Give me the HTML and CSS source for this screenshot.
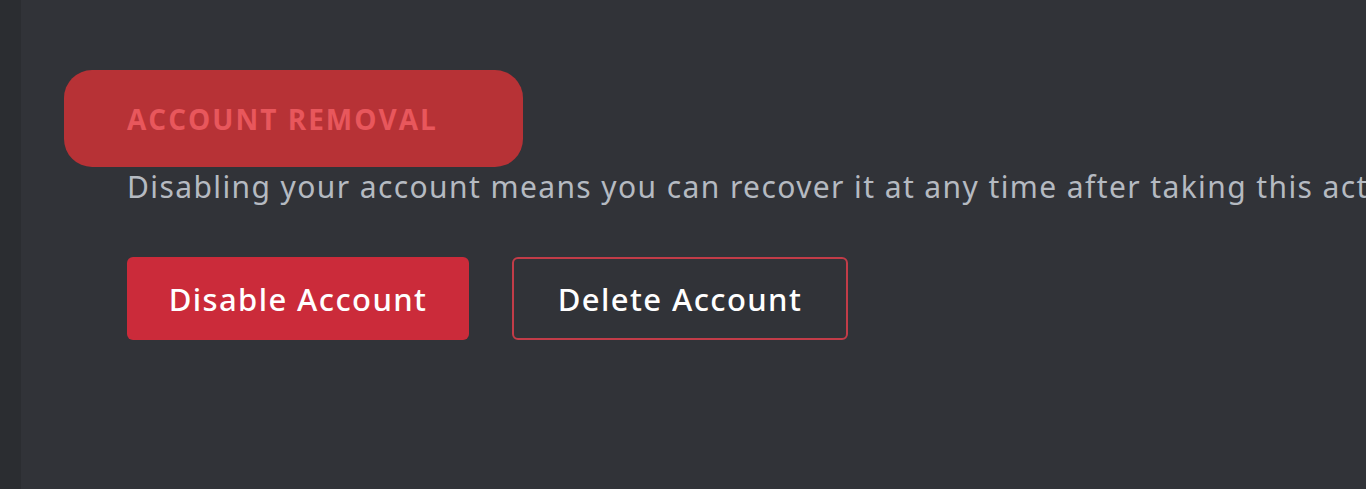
FILE: index.html
```html
<!DOCTYPE html>
<html lang="en">
<head>
<meta charset="utf-8">
<link rel="stylesheet" href="styles.css">
<title>Account Removal</title>
</head>
<body>
<div class="app">
  <aside class="rail"></aside>
  <main class="content">
    <section class="removal">
      <div class="header-pill"><h2 class="header">ACCOUNT REMOVAL</h2></div>
      <p class="desc">Disabling your account means you can recover it at any time after taking this action.</p>
      <div class="actions">
        <button class="btn btn-danger">Disable Account</button>
        <button class="btn btn-outline">Delete Account</button>
      </div>
    </section>
  </main>
</div>
</body>
</html>
```
FILE: styles.css
```css
html, body {
  margin: 0;
  padding: 0;
  height: 100%;
  overflow: hidden;
}
body {
  background: #313338;
  font-family: "Noto Sans", "Open Sans", sans-serif;
}
.app {
  display: flex;
  height: 489px;
}
.rail {
  width: 21px;
  flex: none;
  background: #2b2d31;
}
.content {
  flex: 1;
  background: #313338;
  min-width: 0;
  overflow: hidden;
}
.removal {
  padding: 70px 0 0 43px;
}
.header-pill {
  width: 459px;
  height: 97px;
  box-sizing: border-box;
  background: #b73236;
  border-radius: 28px;
  display: flex;
  align-items: center;
  padding-left: 63px;
}
.header {
  margin: 0;
  font-family: "Open Sans", "Noto Sans", sans-serif;
  font-weight: 700;
  font-size: 28px;
  letter-spacing: 2px;
  color: #e8575c;
  line-height: 1;
}
.desc {
  margin: 0 0 0 63px;
  white-space: nowrap;
  color: #b5bac1;
  font-size: 30px;
  letter-spacing: 1.4px;
  line-height: 40px;
}
.actions {
  display: flex;
  gap: 43px;
  margin: 50px 0 0 63px;
}
.btn {
  height: 83px;
  box-sizing: border-box;
  border-radius: 6px;
  font-family: "Noto Sans", "Open Sans", sans-serif;
  font-size: 31px;
  letter-spacing: 1.4px;
  font-weight: 500;
  color: #ffffff;
  cursor: pointer;
  padding: 0;
}
.btn-danger {
  width: 342px;
  background: #cb2b3a;
  border: none;
}
.btn-outline {
  width: 336px;
  background: transparent;
  border: 2px solid #c23c48;
}
```
